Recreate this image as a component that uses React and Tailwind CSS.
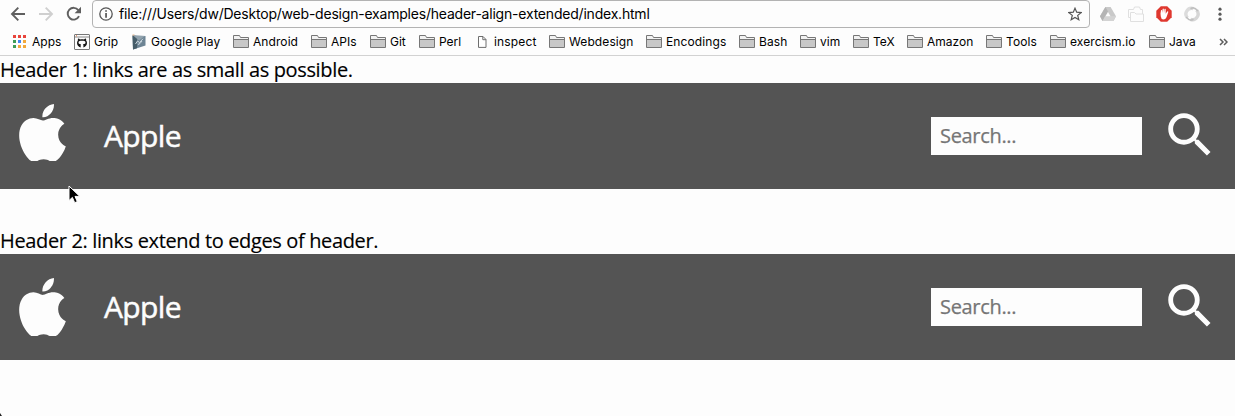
import React from "react";

const bookmarks = [
  { label: "Apps", icon: "apps", cell: "w-[61px]", text: "ml-[5px] tracking-[0.05px]" },
  { label: "Grip", icon: "grip", cell: "w-[58px]", text: "ml-[4px] tracking-[0.1px]" },
  { label: "Google Play", icon: "play", cell: "w-[101px]", text: "ml-[3px] tracking-[0.14px]" },
  { label: "Android", icon: "folder", cell: "w-[78px]", text: "ml-[4px] tracking-[0.08px]" },
  { label: "APIs", icon: "folder", cell: "w-[59px]", text: "ml-[4px]" },
  { label: "Git", icon: "folder", cell: "w-[49px]", text: "ml-[4px]" },
  { label: "Perl", icon: "folder", cell: "w-[55px]", text: "ml-[4px]" },
  { label: "inspect", icon: "page", cell: "w-[75px]", text: "ml-[4px] tracking-[0.16px]" },
  { label: "Webdesign", icon: "folder", cell: "w-[97px]", text: "ml-[4px] tracking-[0.1px]" },
  { label: "Encodings", icon: "folder", cell: "w-[93px]", text: "ml-[4px] tracking-[0.12px]" },
  { label: "Bash", icon: "folder", cell: "w-[61px]", text: "ml-[4px] tracking-[0.1px]" },
  { label: "vim", icon: "folder", cell: "w-[53px]", text: "ml-[4px]" },
  { label: "TeX", icon: "folder", cell: "w-[54px]", text: "ml-[4px]" },
  { label: "Amazon", icon: "folder", cell: "w-[79px]", text: "ml-[4px]" },
  { label: "Tools", icon: "folder", cell: "w-[64px]", text: "ml-[4px] tracking-[0.1px]" },
  { label: "exercism.io", icon: "folder", cell: "w-[99px]", text: "ml-[4px] tracking-[0.1px]" },
  { label: "Java", icon: "folder", cell: "w-[70px]", text: "ml-[4px]" },
];

function BookmarkIcon({ kind }) {
  if (kind === "apps") {
    const colors = ["#e8453c", "#e8453c", "#e8453c", "#3f9d58", "#4285f4", "#f3a93c", "#3f9d58", "#f3a93c", "#f3a93c"];
    return (
      <svg className="h-4 w-[14px] shrink-0" viewBox="0 0 14 16">
        {colors.map((c, i) => (
          <rect key={i} x={(i % 3) * 5} y={1 + Math.floor(i / 3) * 5} width="3" height="3" fill={c} />
        ))}
      </svg>
    );
  }
  if (kind === "grip") {
    return (
      <svg className="h-4 w-4 shrink-0" viewBox="0 0 16 16">
        <rect x="0.5" y="0.5" width="15" height="15" rx="0.5" fill="#fdfdfd" stroke="#777" />
        <path d="M1 3h14" stroke="#888" />
        <path d="M2 1.8h1" stroke="#e8743c" />
        <path d="M6.600 13.500C4.400 12.800 3 11.200 3 9c0-1 .4-1.800.9-2.400-.1-.7-.1-1.300.2-2 .8.1 1.400.5 1.900.9 1.200-.3 2.800-.3 4 0 .5-.4 1.200-.8 1.900-.9.300.7.3 1.300.2 2 .6.6.9 1.400.9 2.400 0 2.200-1.400 3.800-3.600 4.500v-2.200c0-.6-.2-.9-.5-1.100C11 10 11.500 9.400 11.500 8.400 11.500 7 10 6.800 8 6.800S4.500 7 4.500 8.400c0 1 .6 1.600 2.500 1.800-.3.200-.4.5-.4 1z" fill="#151515" />
        <path d="M6.500 12c-1 .3-1.600-.2-2.100-1" fill="none" stroke="#151515" strokeWidth="0.8" />
      </svg>
    );
  }
  if (kind === "play") {
    return (
      <svg className="h-4 w-4 shrink-0" viewBox="0 0 16 16">
        <path d="M.5 1.500 13.500 2v9.500L1 15.500z" fill="#6d8494" />
        <path d="M.5 1.500 5 2v12.300L1 15.500z" fill="#465d69" />
        <path d="m1 1.500 12 .5-6 4.500z" fill="#91a2ad" />
        <path d="m3.500 10 2-3 2 1.500L11 4.800M6 10.500l2-1 2-2.500" fill="none" stroke="#d8e2e8" strokeWidth="0.9" />
        <path d="M.5 1h2" stroke="#e7b184" />
      </svg>
    );
  }
  if (kind === "page") {
    return (
      <svg className="h-4 w-4 shrink-0" viewBox="0 0 16 16">
        <path d="M4.500 2.500H9l3 3v7.900H4.500zM8.800 2.500v3.200H12" fill="#fff" stroke="#6e6e6e" />
      </svg>
    );
  }
  return (
    <svg className="h-4 w-4 shrink-0" viewBox="0 0 16 16">
      <path d="M.5 13.500v-12h6l1 2h8v10z" fill="#f2f2f2" stroke="#777" />
      <path d="M1 6h14v7H1z" fill="#c8c8c8" />
      <path d="M1 5.500h14" stroke="#777" />
    </svg>
  );
}

function Browser() {
  return (
    <div className="flex h-14 flex-col border-b border-[#d2d2d2] font-[Inter,sans-serif] text-black">
      <div className="flex h-7 items-center">
        <svg className="ml-[10px] h-4 w-4 shrink-0" viewBox="0 0 16 16" fill="none" stroke="#5f5f5f" strokeWidth="1.900">
          <path d="M15 8H2.300M8.300 1.700 2 8l6.300 6.300" />
        </svg>
        <svg className="ml-3 h-4 w-4 shrink-0" viewBox="0 0 16 16" fill="none" stroke="#cfcfcf" strokeWidth="1.900">
          <path d="M1 8h12.700M7.700 1.700 14 8l-6.300 6.300" />
        </svg>
        <svg className="ml-3 h-4 w-4 shrink-0" viewBox="0 0 16 16">
          <path d="M13 10.200A5.900 5.900 0 1 1 12.300 4.100" fill="none" stroke="#5f5f5f" strokeWidth="1.900" />
          <path d="M15 .8v6.400H8.600z" fill="#5f5f5f" />
        </svg>
        <div className="ml-[10px] flex h-7 w-[998px] shrink-0 items-center rounded-[4px] border border-[#b3b3b3]">
          <svg className="ml-[6px] h-[14px] w-[14px] shrink-0" viewBox="0 0 14 14">
            <circle cx="7" cy="7" r="6.200" fill="none" stroke="#555" strokeWidth="1.300" />
            <path d="M6.200 6h1.700v4.800H6.200zM6.200 3.200h1.700v1.600H6.200z" fill="#555" />
          </svg>
          <span className="ml-[6px] whitespace-nowrap text-[14px] leading-5 tracking-[-0.21px]">
            file:///Users/dw/Desktop/web-design-examples/header-align-extended/index.html
          </span>
          <svg className="mr-[7px] ml-auto h-[14px] w-[14px] shrink-0" viewBox="0 0 14 14">
            <path d="m7 1.200 1.700 4 4.400.4-3.400 2.800 1.100 4.300L7 10.400l-3.800 2.300 1.100-4.300L.9 5.600l4.400-.4z" fill="none" stroke="#555" strokeWidth="1.200" />
          </svg>
        </div>
        <svg className="ml-[10px] h-4 w-4 shrink-0" viewBox="0 0 16 16">
          <path d="M5.400 1h5.200L16 10.300 13.500 15h-11L0 10.300z" fill="#c9c9c9" />
          <path d="M5.400 1 8 5.500 2.500 15 0 10.300z" fill="#b4b4b4" />
          <path d="M5.200 10.300H16L13.500 15h-11z" fill="#d3d3d3" />
          <path d="m8 6 2.500 4.200h-5z" fill="#fdfdfd" />
        </svg>
        <svg className="ml-3 h-4 w-4 shrink-0" viewBox="0 0 16 16" fill="#fdfdfd" stroke="#e0e0e0">
          <path d="M.5 11.500v-8h5l1-2.500h5l1 2.500h2v8z" />
          <path d="M2.500 15.500v-9h4l1.500 1.500h7.500v7.500z" />
        </svg>
        <svg className="ml-3 h-4 w-4 shrink-0" viewBox="0 0 16 16">
          <path d="M4.800.3h6.400l4.500 4.500v6.400l-4.500 4.500H4.800L.3 11.200V4.800z" fill="#df382f" />
          <path d="M4.500 7.500 5 4.300q.6-.8 1.100 0l.3 2.700.2-4q.7-.9 1.200 0L8 7l.5-3.900q.7-.8 1.200 0V7.700l1.500-2.200q.9-.4 1.100.4l-1.800 5.300Q9.500 13.500 7.500 13.500q-2.500-.2-2.700-3z" fill="#fff" />
        </svg>
        <svg className="ml-3 h-4 w-4 shrink-0" viewBox="0 0 16 16" fill="none">
          <path d="M9.500 2.600A5.700 5.700 0 0 0 3.400 11.800" stroke="#dcdcdc" strokeWidth="3.400" />
          <path d="M6.500 13.400A5.700 5.700 0 0 0 12.600 4.200" stroke="#d6d6d6" strokeWidth="3.400" />
          <path d="M6.500 2.800q4-2.500 7.300 2.300M9.500 13.200Q5.500 15.700 2.200 10.900" stroke="#c0c0c0" strokeWidth="1.600" />
        </svg>
        <svg className="ml-3 h-4 w-4 shrink-0" viewBox="0 0 16 16" fill="#5a5a5a">
          <circle cx="8" cy="3.200" r="1.600" />
          <circle cx="8" cy="8.200" r="1.600" />
          <circle cx="8" cy="13.200" r="1.600" />
        </svg>
      </div>
      <div className="flex h-7 items-center pl-[13px]">
        {bookmarks.map((b) => (
          <div key={b.label} className={"flex shrink-0 items-center " + b.cell}>
            <BookmarkIcon kind={b.icon} />
            <span className={"whitespace-nowrap text-[12px] leading-4 " + b.text}>{b.label}</span>
          </div>
        ))}
        <svg className="h-4 w-[9px] shrink-0" viewBox="0 0 9 16" fill="none" stroke="#5c5c5c" strokeWidth="1.500">
          <path d="m1 5 3 3-3 3M5 5l3 3-3 3" />
        </svg>
      </div>
    </div>
  );
}

function SiteHeader({ logoClass }) {
  return (
    <header className="flex h-[106px] items-start bg-[#545454] font-['Open_Sans',sans-serif]">
      <svg className={"ml-[19px] w-[47px] shrink-0 " + logoClass} viewBox="2.160 0 19.680 23.700" preserveAspectRatio="none" fill="#fdfdfd">
        <path d="M12.152 6.896c-.948 0-2.415-1.078-3.960-1.040-2.040.027-3.910 1.183-4.961 3.014-2.117 3.675-.546 9.103 1.519 12.090 1.013 1.454 2.208 3.090 3.792 3.039 1.520-.065 2.090-.987 3.935-.987 1.831 0 2.350.987 3.960.948 1.637-.026 2.676-1.480 3.676-2.948 1.156-1.688 1.636-3.325 1.662-3.415-.039-.013-3.182-1.221-3.220-4.857-.026-3.040 2.480-4.494 2.597-4.559-1.429-2.090-3.623-2.324-4.390-2.376-2-.156-3.675 1.090-4.610 1.090zM15.530 3.830c.843-1.012 1.400-2.427 1.245-3.830-1.207.052-2.662.805-3.532 1.818-.780.896-1.454 2.338-1.273 3.714 1.338.104 2.715-.688 3.559-1.701" />
      </svg>
      <span className="mt-[33px] ml-[38px] text-[30px] leading-10 tracking-[-0.65px] text-[#fdfdfd] [-webkit-text-stroke:0.5px_#fdfdfd]">Apple</span>
      <input
        className="mt-[34px] ml-auto h-[38px] w-[211px] rounded-none bg-[#fdfdfd] px-[9px] pb-[2px] text-[20px] tracking-[-0.32px] text-[#757575] outline-none [-webkit-text-stroke:0.25px_#757575] placeholder:text-[#757575]"
        placeholder="Search..."
      />
      <svg className="mt-[23px] mr-[16px] ml-[19px] h-[58px] w-[58px] shrink-0" viewBox="0 0 24 24" fill="#fdfdfd">
        <path d="M15.500 14h-.790l-.280-.270A6.471 6.471 0 0 0 16 9.500 6.500 6.500 0 1 0 9.500 16c1.610 0 3.090-.590 4.230-1.570l.270.280v.790l5 4.990L20.490 19l-4.990-5zm-6 0C7.010 14 5 11.990 5 9.500S7.010 5 9.500 5 14 7.010 14 9.500 11.990 14 9.500 14z" />
      </svg>
    </header>
  );
}

export default function App() {
  return (
    <div className="relative h-[416px] w-[1235px] overflow-hidden bg-[#fdfdfd]">
      <Browser />
      <p className="h-[27px] font-['Open_Sans',sans-serif] text-[20px] leading-[27px] tracking-[-0.36px] text-black [-webkit-text-stroke:0.15px_#000]">Header 1: links are as small as possible.</p>
      <SiteHeader logoClass="mt-[21px] h-[57px]" />
      <p className="mt-[38px] h-[27px] font-['Open_Sans',sans-serif] text-[20px] leading-[27px] tracking-[-0.36px] text-black [-webkit-text-stroke:0.15px_#000]">Header 2: links extend to edges of header.</p>
      <SiteHeader logoClass="mt-[24px] h-[58px]" />
      <svg className="absolute top-[185px] left-[68px] h-5 w-[14px]" viewBox="0 0 14 20">
        <path d="M1 1v14.500l3.400-3.100 2.300 5.300 2.600-1.100-2.300-5.200h4.800z" fill="#000" stroke="#fff" strokeWidth="1" />
      </svg>
      <svg className="absolute bottom-0 left-0 h-[3px] w-[2px]" viewBox="0 0 2 3">
        <path d="M0 0v3h2z" fill="#222" />
      </svg>
    </div>
  );
}
